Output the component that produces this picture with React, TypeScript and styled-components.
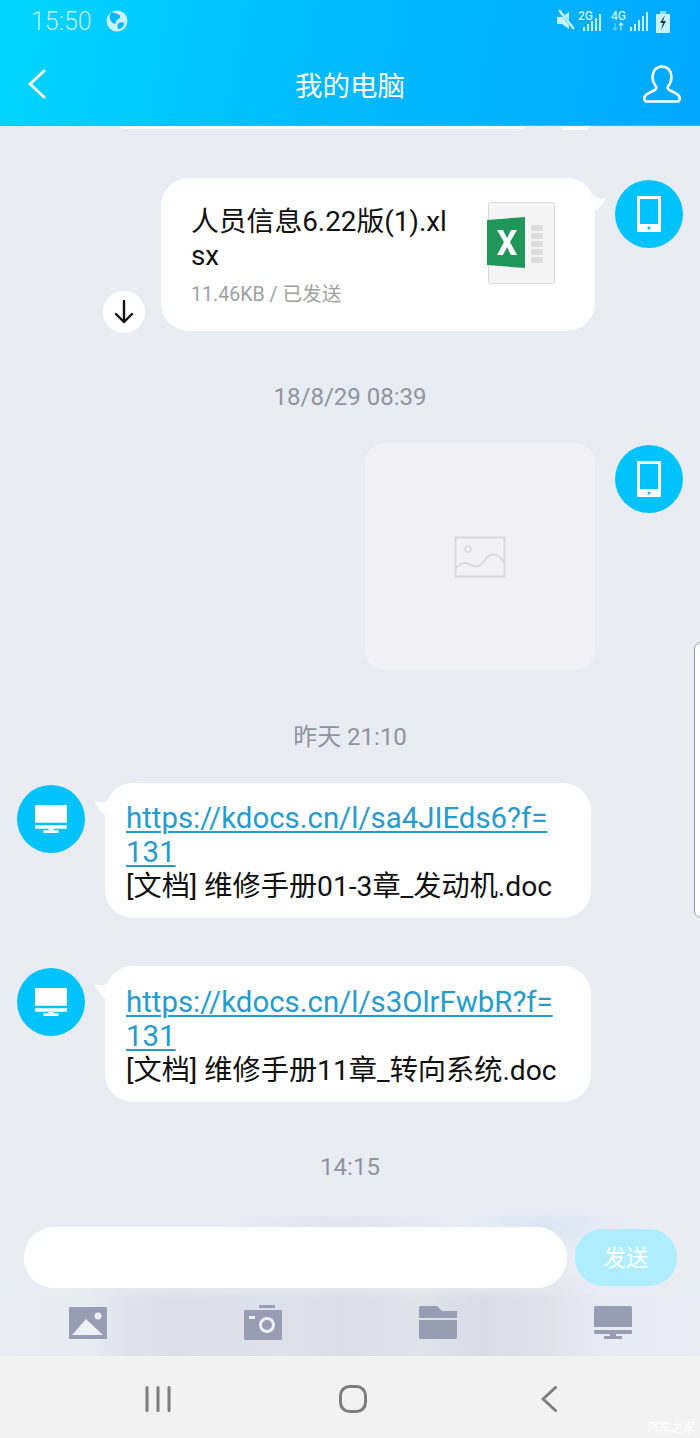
import * as React from 'react';
import styled, { createGlobalStyle } from 'styled-components';

const FONT = `Roboto, "Noto Sans CJK SC", sans-serif`;

const GlobalStyle = createGlobalStyle`
  html, body {
    margin: 0;
    padding: 0;
    background-color: #e9ecf3;
    font-family: ${FONT};
  }
`;

const Page = styled.div`
  position: relative;
  width: 700px;
  height: 1438px;
  display: flex;
  flex-direction: column;
  overflow: hidden;
  background-color: #e9ecf3;
`;

const Header = styled.header`
  height: 126px;
  flex: none;
  background: linear-gradient(100deg, #00d6ff 0%, #00bcff 45%, #00a8ff 100%);
  border-bottom: 1px solid #3ab4ea;
  box-sizing: border-box;
`;

const StatusBar = styled.div`
  height: 42px;
  padding: 0 30px 0 31px;
  display: flex;
  align-items: center;
  justify-content: space-between;
`;

const StatusLeft = styled.div`
  display: flex;
  align-items: center;
  gap: 14px;
`;

const Clock = styled.span`
  font-size: 25px;
  font-weight: 300;
  color: #bdf0ff;
`;

const StatusRight = styled.div`
  display: flex;
  align-items: center;
`;

const NavRow = styled.div`
  height: 83px;
  padding: 0 19px;
  display: flex;
  align-items: center;
  justify-content: space-between;
`;

const NavSlot = styled.div<{ $inset?: number }>`
  width: 38px;
  box-sizing: border-box;
  padding-left: ${(p) => p.$inset ?? 0}px;
  display: flex;
`;

const Title = styled.h1`
  margin: 0;
  font-size: 27.5px;
  font-weight: 400;
  color: #ffffff;
`;

const Messages = styled.main`
  flex: 1;
  display: flex;
  flex-direction: column;
  overflow: hidden;
`;

const PeekRow = styled.div`
  flex: none;
  display: flex;
  gap: 36px;
  padding-left: 120px;
`;

const PeekBubble = styled.div`
  width: 405px;
  height: 3px;
  background-color: #ffffff;
  border-radius: 0 0 14px 14px;
`;

const PeekTail = styled.div`
  width: 28px;
  height: 4px;
  background-color: #ffffff;
  border-radius: 0 0 14px 14px;
`;

const Row = styled.div<{ $side: 'left' | 'right'; $top: number }>`
  flex: none;
  display: flex;
  align-items: flex-start;
  justify-content: ${(p) => (p.$side === 'right' ? 'flex-end' : 'flex-start')};
  margin-top: ${(p) => p.$top}px;
  padding: ${(p) => (p.$side === 'right' ? '0 17px 0 0' : '0 0 0 17px')};
`;

const TimeStamp = styled.div<{ $top: number }>`
  flex: none;
  margin-top: ${(p) => p.$top}px;
  height: 30px;
  line-height: 30px;
  text-align: center;
  font-size: 24px;
  color: #8f949e;
`;

const Avatar = styled.div<{ $side: 'left' | 'right' }>`
  flex: none;
  width: 68px;
  height: 68px;
  margin: 2px ${(p) => (p.$side === 'left' ? '20px' : '0')} 0 ${(p) => (p.$side === 'right' ? '20px' : '0')};
  border-radius: 50%;
  background-color: #00c3fc;
  display: flex;
  align-items: center;
  justify-content: center;
`;

const Bubble = styled.div<{ $side: 'left' | 'right' }>`
  position: relative;
  background-color: #ffffff;
  border-radius: 28px;

  &::after {
    content: '';
    position: absolute;
    top: 17px;
    width: 14px;
    height: 15px;
    background-color: #ffffff;
    ${(p) =>
      p.$side === 'right'
        ? 'right: -12px; clip-path: polygon(0 0, 30% 20%, 60% 30%, 100% 12%, 70% 60%, 25% 100%, 0 100%);'
        : 'left: -11px; clip-path: polygon(100% 0, 70% 15%, 30% 15%, 0 5%, 30% 55%, 75% 100%, 100% 100%);'}
  }
`;

const FileBubble = styled(Bubble)`
  width: 434px;
  height: 153px;
  box-sizing: border-box;
  padding: 27px 40px 0 30px;
  display: flex;
  justify-content: space-between;
`;

const FileInfo = styled.div`
  width: 262px;
`;

const FileName = styled.div`
  font-size: 27.8px;
  line-height: 34px;
  color: #111111;
  word-break: break-all;
`;

const FileMeta = styled.div`
  margin-top: 8px;
  font-size: 19.6px;
  line-height: 28px;
  color: #a0a0a0;
`;

const ExcelIcon = styled.svg`
  flex: none;
  margin: -3px 0 0 0;
`;

const DownloadBadge = styled.div`
  flex: none;
  align-self: flex-end;
  width: 42px;
  height: 42px;
  margin: 0 16px -2px 0;
  border-radius: 50%;
  background-color: #ffffff;
  display: flex;
  align-items: center;
  justify-content: center;
`;

const ImagePlaceholder = styled.div`
  position: relative;
  width: 230px;
  height: 227px;
  border-radius: 20px;
  background-color: #f2f2f4;
  display: flex;
  align-items: center;
  justify-content: center;
`;

const TextBubble = styled(Bubble)<{ $padTop: number }>`
  width: 486px;
  box-sizing: border-box;
  padding: ${(p) => p.$padTop}px 32px 14px 21px;
  font-size: 29.4px;
  line-height: 34px;
  color: #111111;
`;

const DocLink = styled.a`
  display: block;
  color: #259ccb;
  text-decoration: underline;
  text-decoration-thickness: 2px;
  text-underline-offset: 3px;
  word-break: break-all;
`;

const DocName = styled.div`
  margin-top: 1px;
  white-space: nowrap;
  font-size: 28.2px;
`;

const Composer = styled.section`
  flex: none;
  height: 141px;
  box-sizing: border-box;
  display: flex;
  flex-direction: column;
  padding-top: 12px;
  background:
    radial-gradient(ellipse 90px 30px at 545px 10px, #d9e7f3 0%, rgba(217, 231, 243, 0) 100%),
    radial-gradient(ellipse 130px 20px at 340px 12px, #e1e4ec 0%, rgba(225, 228, 236, 0) 100%),
    #e9ecf3;
`;

const InputRow = styled.div`
  position: relative;
  z-index: 1;
  display: flex;
  align-items: center;
  padding-left: 24px;
  gap: 8px;
`;

const InputField = styled.div`
  width: 543px;
  height: 61px;
  border-radius: 30px;
  background-color: #ffffff;
`;

const SendButton = styled.button`
  width: 102px;
  height: 57px;
  padding: 0 0 3px;
  border: none;
  border-radius: 28px;
  background-color: #aeeeff;
  color: #ffffff;
  font-family: ${FONT};
  font-size: 22.5px;
`;

const ToolRow = styled.div`
  position: relative;
  flex: 1;
  display: grid;
  grid-template-columns: repeat(4, 175px);
  align-content: start;
  padding-top: 17px;

  &::before {
    content: '';
    position: absolute;
    inset: -10px 0 0 0;
    background: linear-gradient(
      to right,
      #e9ecf3 0,
      #e8ebf2 90px,
      #dfe2ea 130px,
      #dcdfe8 170px,
      #dee1e9 300px,
      #dadde6 340px,
      #e0e3ea 420px,
      #d9dce5 480px,
      #dfe2e9 550px,
      #e8ebf3 600px,
      #e9ecf3 700px
    );
    mask-image: linear-gradient(to bottom, transparent 0, #000 22px);
  }
`;

const ToolButton = styled.div`
  position: relative;
  height: 35px;
  display: flex;
  align-items: center;
  justify-content: center;
`;

const SystemNav = styled.nav`
  position: relative;
  flex: none;
  height: 82px;
  box-sizing: border-box;
  padding: 4px 0 0 145px;
  display: flex;
  align-items: center;
  background-color: #f2f2f2;
`;

const SystemIcon = styled.svg<{ $left: number }>`
  flex: none;
  margin-left: ${(p) => p.$left}px;
`;

const Watermark = styled.div`
  position: absolute;
  right: 5px;
  bottom: 3px;
  font-size: 12px;
  color: #ffffff;
`;

const ScrollHandle = styled.div`
  position: absolute;
  top: 642px;
  right: -2px;
  width: 8px;
  height: 276px;
  box-sizing: border-box;
  background-color: #ffffff;
  border: 1px solid #9c9c9c;
  border-radius: 7px 0 0 7px;
`;

const PhoneIcon = () => (
  <svg width="24" height="36" viewBox="0 0 24 36">
    <path
      fillRule="evenodd"
      d="M1 0h22a1 1 0 0 1 1 1v34a1 1 0 0 1-1 1H1a1 1 0 0 1-1-1V1a1 1 0 0 1 1-1zM3 3v25h18V3z"
      fill="#fff"
    />
    <circle cx="12" cy="32" r="1.6" fill="#00c3fc" />
  </svg>
);

const DesktopIcon = ({ color, width, height }: { color: string; width: number; height: number }) => (
  <svg width={width} height={height} viewBox="0 0 38 33">
    <path d="M1.5 0h35A1.5 1.5 0 0 1 38 1.500V21H0V1.500A1.500 1.500 0 0 1 1.500 0z" fill={color} />
    <path d="M0 24h38v3a1 1 0 0 1-1 1H1a1 1 0 0 1-1-1z" fill={color} />
    <rect x="16" y="28" width="6" height="2" fill={color} />
    <rect x="10" y="30" width="18" height="3" rx="0.5" fill={color} />
  </svg>
);

const TOOL_COLOR = '#979db3';

const App: React.FC = () => (
  <Page>
    <GlobalStyle />
    <Header>
      <StatusBar>
        <StatusLeft>
          <Clock>15:50</Clock>
          <svg width="22" height="22" viewBox="0 0 22 22">
            <circle cx="11" cy="11" r="10.500" fill="#c9f2ff" />
            <path d="M6 2c3 2 7 1 8 4s-4 3-4 6-3 2-5-1-2-7 1-9z" fill="#00b8f8" />
            <path d="M13 13c3-1 5-1 5 1s-3 5-5 5-2-5 0-6z" fill="#00b8f8" />
          </svg>
        </StatusLeft>
        <StatusRight>
          <svg width="113" height="24" viewBox="0 0 113 24">
            <g fill="#c8f1ff">
              <path d="M0 8h5l7-5v17l-7-5H0z" />
              <path d="M1 2l2-2 15 19-2 2z" stroke="#00aeff" strokeWidth="0.500" />
              <text x="21" y="11" fontFamily="Roboto, sans-serif" fontSize="12" fontWeight="500">
                2G
              </text>
              <rect x="26" y="18" width="2" height="4" />
              <rect x="30" y="15" width="2" height="7" />
              <rect x="34" y="12" width="2" height="10" />
              <rect x="38" y="9" width="2" height="13" />
              <rect x="42" y="5" width="2" height="17" />
              <text x="54" y="11" fontFamily="Roboto, sans-serif" fontSize="12" fontWeight="500">
                4G
              </text>
              <rect x="73" y="18" width="2" height="4" />
              <rect x="77" y="15" width="2" height="7" />
              <rect x="81" y="11" width="2" height="11" />
              <rect x="85" y="7" width="2" height="15" />
              <rect x="89" y="3" width="2" height="19" />
            </g>
            <path d="M58 14v7m-2-2l2 2 2-2" stroke="#6fd0f5" strokeWidth="1.200" fill="none" />
            <path d="M64 21v-7m-2 2l2-2 2 2" stroke="#c8f1ff" strokeWidth="1.200" fill="none" />
            <rect x="99" y="5" width="14" height="19" rx="1" fill="#c8f1ff" />
            <rect x="103" y="2" width="6" height="3" fill="#8cdcf8" />
            <path d="M108 6l-5 8h3l-2 7 5-9h-3z" fill="#14384c" />
          </svg>
        </StatusRight>
      </StatusBar>
      <NavRow>
        <NavSlot $inset={9}>
          <svg width="18" height="30" viewBox="0 0 18 30">
            <path d="M16 2L2 15l14 13" stroke="#fff" strokeWidth="3" strokeLinecap="round" strokeLinejoin="round" fill="none" />
          </svg>
        </NavSlot>
        <Title>我的电脑</Title>
        <NavSlot>
          <svg width="38" height="38" viewBox="0 0 38 38">
            <path
              d="M19 1.500c-6 0-9.500 5-9.500 10.500 0 4 1.500 7 3.500 9.500 1 1.500 0 3-2 4-4 1.800-8.500 3.500-9.500 6.500-.5 2 0 4.500 2 4.500h31c2 0 2.500-2.500 2-4.500-1-3-5.500-4.700-9.500-6.500-2-1-3-2.500-2-4 2-2.500 3.500-5.500 3.500-9.500 0-5.500-3.500-10.500-9.500-10.500z"
              stroke="#fff"
              strokeWidth="2.600"
              fill="none"
              strokeLinejoin="round"
            />
          </svg>
        </NavSlot>
      </NavRow>
    </Header>

    <Messages>
      <PeekRow>
        <PeekBubble />
        <PeekTail />
      </PeekRow>

      <Row $side="right" $top={48}>
        <DownloadBadge>
          <svg width="20" height="24" viewBox="0 0 20 24">
            <path d="M10 1v21M2 14l8 8 8-8" stroke="#111" strokeWidth="2.400" fill="none" strokeLinecap="round" strokeLinejoin="round" />
          </svg>
        </DownloadBadge>
        <FileBubble $side="right">
          <FileInfo>
            <FileName>人员信息6.22版(1).xlsx</FileName>
            <FileMeta>11.46KB / 已发送</FileMeta>
          </FileInfo>
          <ExcelIcon width="68" height="82" viewBox="0 0 68 82">
            <rect x="1.500" y="0.500" width="66" height="81" rx="2" fill="#f5f5f5" stroke="#d9d9d9" />
            <g fill="#dcdcdc">
              <rect x="44" y="23" width="12" height="6" />
              <rect x="44" y="31" width="12" height="6" />
              <rect x="44" y="39" width="12" height="6" />
              <rect x="44" y="47" width="12" height="6" />
              <rect x="44" y="55" width="12" height="6" />
            </g>
            <path d="M0 18L38 15v51L0 63z" fill="#21965a" />
            <path d="M10 28h6l4 8 4-8h6l-7 12 7 13h-6l-4-8-4 8h-6l7-13z" fill="#fff" />
          </ExcelIcon>
        </FileBubble>
        <Avatar $side="right">
          <PhoneIcon />
        </Avatar>
      </Row>

      <TimeStamp $top={51}>18/8/29 08:39</TimeStamp>

      <Row $side="right" $top={31}>
        <ImagePlaceholder>
          <svg width="52" height="42" viewBox="0 0 52 42">
            <rect x="1.500" y="1.500" width="49" height="39" fill="none" stroke="#d9d9dc" strokeWidth="2" />
            <circle cx="14" cy="13" r="3" fill="none" stroke="#d9d9dc" strokeWidth="1.500" />
            <path d="M2 32c6-6 10-6 15-3s9 2 14-5 12-8 19 2" fill="none" stroke="#d9d9dc" strokeWidth="2" />
          </svg>
        </ImagePlaceholder>
        <Avatar $side="right">
          <PhoneIcon />
        </Avatar>
      </Row>

      <TimeStamp $top={52}>昨天 21:10</TimeStamp>

      <Row $side="left" $top={31}>
        <Avatar $side="left">
          <DesktopIcon color="#fff" width={32} height={30} />
        </Avatar>
        <TextBubble $side="left" $padTop={18}>
          <DocLink href="#">https://kdocs.cn/l/sa4JIEds6?f=131</DocLink>
          <DocName>[文档] 维修手册01-3章_发动机.doc</DocName>
        </TextBubble>
      </Row>

      <Row $side="left" $top={48}>
        <Avatar $side="left">
          <DesktopIcon color="#fff" width={32} height={30} />
        </Avatar>
        <TextBubble $side="left" $padTop={19}>
          <DocLink href="#">https://kdocs.cn/l/s3OlrFwbR?f=131</DocLink>
          <DocName>[文档] 维修手册11章_转向系统.doc</DocName>
        </TextBubble>
      </Row>

      <TimeStamp $top={50}>14:15</TimeStamp>
    </Messages>

    <Composer>
      <InputRow>
        <InputField />
        <SendButton>发送</SendButton>
      </InputRow>
      <ToolRow>
        <ToolButton>
          <svg width="38" height="32" viewBox="0 0 38 32">
            <rect width="38" height="32" rx="1" fill={TOOL_COLOR} />
            <circle cx="29" cy="9" r="3.500" fill="#eef0f5" />
            <path d="M3 28L17 12l17 16z" fill="#eef0f5" />
          </svg>
        </ToolButton>
        <ToolButton>
          <svg width="38" height="35" viewBox="0 0 38 35">
            <rect x="15" y="0" width="16" height="3" fill={TOOL_COLOR} />
            <rect x="0" y="5" width="38" height="30" rx="1" fill={TOOL_COLOR} />
            <rect x="5" y="11" width="6" height="3" fill="#eef0f5" />
            <circle cx="23" cy="20" r="6.500" fill="none" stroke="#eef0f5" strokeWidth="3" />
          </svg>
        </ToolButton>
        <ToolButton>
          <svg width="38" height="33" viewBox="0 0 38 33">
            <path d="M1.500 0H18l5 5h15v7H0V1.500A1.500 1.500 0 0 1 1.500 0z" fill={TOOL_COLOR} />
            <path d="M0 14h38v17.500a1.500 1.500 0 0 1-1.500 1.500h-35A1.500 1.500 0 0 1 0 31.500z" fill={TOOL_COLOR} />
          </svg>
        </ToolButton>
        <ToolButton>
          <DesktopIcon color={TOOL_COLOR} width={38} height={33} />
        </ToolButton>
      </ToolRow>
    </Composer>

    <SystemNav>
      <SystemIcon $left={0} width="26" height="26" viewBox="0 0 26 26">
        <path d="M2 1.500v23M13 1.500v23M24 1.500v23" stroke="#7d7d7d" strokeWidth="3" strokeLinecap="round" />
      </SystemIcon>
      <SystemIcon $left={168} width="28" height="28" viewBox="0 0 28 28">
        <rect x="1.500" y="1.500" width="25" height="25" rx="9" fill="none" stroke="#7d7d7d" strokeWidth="3" />
      </SystemIcon>
      <SystemIcon $left={174} width="16" height="26" viewBox="0 0 16 26">
        <path d="M14.500 1.500L2 13l12.500 11.500" fill="none" stroke="#7d7d7d" strokeWidth="3" strokeLinecap="round" strokeLinejoin="round" />
      </SystemIcon>
      <Watermark>汽车之家</Watermark>
    </SystemNav>

    <ScrollHandle />
  </Page>
);

export default App;
